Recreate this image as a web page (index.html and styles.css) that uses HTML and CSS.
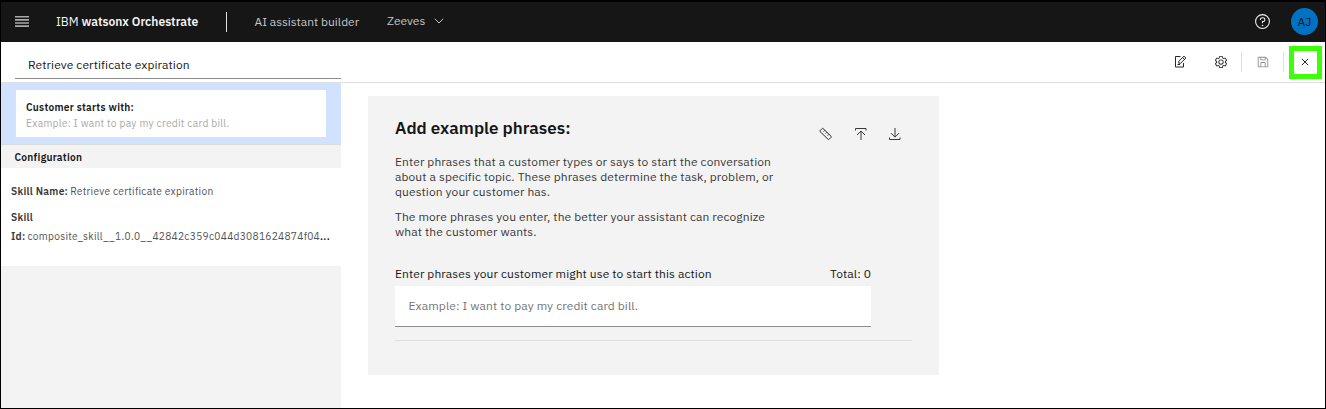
FILE: index.html
```html
<!DOCTYPE html>
<html lang="en">
<head>
<meta charset="utf-8">
<title>AI assistant builder</title>
<link rel="stylesheet" href="styles.css">
</head>
<body>
<div class="app">
  <header class="topbar">
    <svg class="menu" width="14" height="11" viewBox="0 0 14 11" fill="#a8a8a8"><path d="M0 0h14v1.600H0zM0 3.100h14v1.600H0zM0 6.200h14v1.600H0zM0 9.300h14v1.600H0z"/></svg>
    <div class="brand"><span class="ibm">IBM</span> <b>watsonx Orchestrate</b></div>
    <span class="brand-rule"></span>
    <span class="product">AI assistant builder</span>
    <span class="assistant">Zeeves</span>
    <svg class="chevron" width="10" height="6" viewBox="0 0 10 6" fill="none" stroke="#c6c6c6" stroke-width="1"><path d="M.8.8 5 5 9.200.8"/></svg>
    <svg class="help" width="17" height="17" viewBox="0 0 32 32" fill="#f4f4f4"><path d="M16 2a14 14 0 1 0 14 14A14 14 0 0 0 16 2Zm0 26a12 12 0 1 1 12-12 12 12 0 0 1-12 12Z"/><circle cx="16" cy="23.500" r="1.500"/><path d="M17 8h-1.500A4.490 4.490 0 0 0 11 12.500v.5h2v-.5a2.500 2.500 0 0 1 2.500-2.500H17a2.500 2.500 0 0 1 0 5h-2v4.500h2V17a4.500 4.500 0 0 0 0-9Z"/></svg>
    <span class="avatar">AJ</span>
  </header>
  <div class="toolbar">
    <div class="title">Retrieve certificate expiration</div>
    <div class="tools">
      <svg class="edit" width="13" height="13" viewBox="0 0 13 13" fill="none" stroke="#262626" stroke-width="1"><path d="M6.500 1.500h-5v10.500h8V8"/><path d="M4.800 8.300v-2L10 1.100l1.900 1.900-5.200 5.200zM8.600 2.500l1.900 1.900M3.500 9.500h2.500"/></svg>
      <svg class="gear" width="14" height="14" viewBox="0 0 32 32" fill="#262626"><path d="M27 16.760v-1.530l1.920-1.680A2 2 0 0 0 29.300 11l-2.360-4a2 2 0 0 0-1.730-1 2 2 0 0 0-.64.100l-2.430.820a11.350 11.350 0 0 0-1.310-.75l-.51-2.520a2 2 0 0 0-2-1.610h-4.680a2 2 0 0 0-2 1.610l-.51 2.520a11.480 11.480 0 0 0-1.320.75l-2.380-.86A2 2 0 0 0 6.790 6a2 2 0 0 0-1.730 1L2.700 11a2 2 0 0 0 .41 2.510L5 15.240v1.530l-1.890 1.680A2 2 0 0 0 2.700 21l2.360 4a2 2 0 0 0 1.730 1 2 2 0 0 0 .64-.100l2.430-.82a11.350 11.350 0 0 0 1.310.75l.51 2.520a2 2 0 0 0 2 1.610h4.720a2 2 0 0 0 2-1.610l.51-2.520a11.480 11.480 0 0 0 1.320-.75l2.420.82a2 2 0 0 0 .64.100 2 2 0 0 0 1.730-1l2.280-4a2 2 0 0 0-.41-2.510ZM25.210 24l-3.430-1.160a8.860 8.860 0 0 1-2.710 1.570L18.360 28h-4.720l-.71-3.550a9.360 9.360 0 0 1-2.700-1.570L6.790 24l-2.360-4 2.720-2.400a8.900 8.900 0 0 1 0-3.130L4.430 12l2.360-4 3.430 1.160a8.860 8.860 0 0 1 2.710-1.570L13.640 4h4.720l.71 3.550a9.360 9.360 0 0 1 2.700 1.570L25.210 8l2.360 4-2.720 2.400a8.900 8.900 0 0 1 0 3.130L27.570 20Z"/><path d="M16 22a6 6 0 1 1 6-6 5.940 5.940 0 0 1-6 6Zm0-10a3.910 3.910 0 0 0-4 4 3.910 3.910 0 0 0 4 4 3.910 3.910 0 0 0 4-4 3.910 3.910 0 0 0-4-4Z"/></svg>
      <span class="rule"></span>
      <svg class="save" width="14" height="14" viewBox="0 0 32 32" fill="#8d8d8d"><path d="m27.710 9.290-5-5A1 1 0 0 0 22 4H6a2 2 0 0 0-2 2v20a2 2 0 0 0 2 2h20a2 2 0 0 0 2-2V10a1 1 0 0 0-.29-.71ZM12 6h8v4h-8Zm8 20h-8v-8h8Zm2 0v-8a2 2 0 0 0-2-2h-8a2 2 0 0 0-2 2v8H6V6h4v4a2 2 0 0 0 2 2h8a2 2 0 0 0 2-2V6.410l4 4V26Z"/></svg>
      <span class="rule rule-end"></span>
      <span class="close"><svg width="8" height="8" viewBox="0 0 8 8" fill="none" stroke="#262626" stroke-width="1"><path d="m.9.900 6.200 6.200m0-6.200L.9 7.100"/></svg></span>
    </div>
  </div>
  <div class="content">
    <aside class="sidebar">
      <div class="start">
        <div class="start-card">
          <div class="start-label">Customer starts with:</div>
          <div class="start-hint">Example: I want to pay my credit card bill.</div>
        </div>
      </div>
      <div class="config-head">Configuration</div>
      <div class="config">
        <div class="skill-name"><b>Skill Name:</b><span>Retrieve certificate expiration</span></div>
        <div class="skill"><b>Skill</b></div>
        <div class="skill-id"><b>Id:</b><span>composite_skill__1.0.0__42842c359c044d3081624874f04</span><i>...</i></div>
      </div>
    </aside>
    <main class="main">
      <section class="panel">
        <div class="panel-head">
          <h1>Add example phrases:</h1>
          <div class="actions">
            <svg class="ruler" width="14" height="14" viewBox="0 0 14 14" fill="none" stroke="#262626" stroke-width="1"><path d="m1.100 3.600 2-2a.7.700 0 0 1 1 0l8 7.700a.7.700 0 0 1 0 1l-2 2a.7.700 0 0 1-1 0l-8-7.700a.7.700 0 0 1 0-1zM5.800 3.400 4.600 4.600M7.800 5.400 6.600 6.600M9.800 7.400 8.600 8.600"/></svg>
            <svg width="14" height="14" viewBox="0 0 14 14" fill="none" stroke="#393939" stroke-width="1"><path d="M1.500 3.500v-2h10.500v2M7 13V4M3 8l4-4 4 4"/></svg>
            <svg width="14" height="14" viewBox="0 0 14 14" fill="none" stroke="#393939" stroke-width="1"><path d="M1.500 10.500v2h10.500v-2M7 1v9.100M3 6.100l4 4 4-4"/></svg>
          </div>
        </div>
        <p>Enter phrases that a customer types or says to start the conversation<br>about a specific topic. These phrases determine the task, problem, or<br>question your customer has.</p>
        <p class="p2">The more phrases you enter, the better your assistant can recognize<br>what the customer wants.</p>
        <div class="field-head"><span class="field-label">Enter phrases your customer might use to start this action</span><span class="total">Total: 0</span></div>
        <div class="field"><span>Example: I want to pay my credit card bill.</span></div>
        <div class="divider"></div>
      </section>
    </main>
  </div>
</div>
</body>
</html>
```
FILE: styles.css
```css
* { box-sizing: border-box; }
body { margin: 0; font-family: "IBM Plex Sans", Roboto, "Liberation Sans", sans-serif; font-size: 12px; color: #161616; background: #fff; }
b { font-weight: 600; }
span, b, h1, p { white-space: nowrap; }
.app { width: 1326px; height: 409px; border: 1px solid #000; display: flex; flex-direction: column; overflow: hidden; }
svg { display: block; flex: none; }

.topbar { height: 41px; flex: none; background: #161616; border-top: 1px solid #000; display: flex; align-items: center; padding: 0 7px 0 13.5px; color: #c6c6c6; }
.menu { margin-top: -2px; }
.brand { margin-left: 27.5px; width: 142px; font-size: 12.1px; color: #f4f4f4; white-space: nowrap; margin-top: -2px; }
.brand-rule { width: 1px; height: 20px; background: #e0e0e0; margin: -1px 27.5px 0 28px; }
.product { width: 104.5px; font-size: 12px; margin-top: -1px; }
.assistant { width: 38px; margin-left: 28px; margin-top: -3px; }
.chevron { margin-left: 9px; margin-top: -2px; }
.help { margin-left: auto; margin-top: -1px; }
.avatar { width: 27px; height: 27px; border-radius: 50%; background: #0072c3; color: #161616; display: flex; align-items: center; justify-content: center; margin: -1px 0 0 20px; font-size: 12px; }

.toolbar { height: 41px; flex: none; border-bottom: 1px solid #e0e0e0; display: flex; letter-spacing: .1px; }
.title { width: 326px; height: 37px; margin-left: 14px; border-bottom: 1px solid #8d8d8d; padding: 15px 0 0 13px; line-height: 16px; }
.tools { display: flex; align-items: center; height: 39px; margin-left: auto; padding-right: 3px; }
.gear { margin-left: 27px; }
.rule { width: 1px; height: 20px; background: #e0e0e0; margin: 0 14px 0 13px; }
.rule-end { margin: 0 5px 0 13px; }
.close { width: 33px; height: 33px; border: 5px solid #3dff0a; display: flex; align-items: center; justify-content: center; margin-top: 2px; padding: 0 2px 2px 0; }

.content { flex: 1; display: flex; min-height: 0; }
.sidebar { width: 340px; background: #f3f3f3; font-size: 10.2px; letter-spacing: .28px; }
.start { height: 62px; background: #d0e2ff; border-bottom: 1px solid #dcdcdc; padding: 7px 15px; }
.start-card { height: 47px; background: #fff; padding: 10px 10px 0; line-height: 16px; }
.start-label { font-weight: 600; }
.start-hint { color: #a8a8a8; }
.config-head { height: 23px; line-height: 25px; padding-left: 13.5px; font-weight: 600; }
.config { height: 98px; background: #fff; padding: 15px 10px; line-height: 17px; color: #525252; }
.config b { color: #393939; }
.config span { margin-left: 2px; }
.skill { margin-top: 9px; }
.skill-id { margin-top: 2px; white-space: nowrap; }
.skill-id i { font-style: normal; color: #161616; font-weight: 600; }

.main { padding: 13px 0 0 27px; }
.panel { width: 571px; height: 279px; background: #f3f3f3; padding: 22px 27px 0; letter-spacing: .095px; }
.panel-head { display: flex; justify-content: space-between; height: 36px; padding-right: 10px; }
h1 { font-size: 17px; line-height: 20px; font-weight: 600; margin: 0; letter-spacing: 0; }
.actions { display: flex; gap: 20px; padding-top: 9px; }
.ruler { margin-right: 1px; }
p { margin: 0; line-height: 15px; color: #393939; }
.p2 { margin-top: 10px; }
.field-head { width: 476px; display: flex; justify-content: space-between; margin-top: 26px; line-height: 18px; height: 21px; }
.field { width: 476px; height: 41px; background: #fff; border-bottom: 1px solid #8d8d8d; line-height: 40px; padding-left: 13.5px; color: #757575; }
.divider { height: 1px; background: #dedede; margin-top: 13px; }
```
